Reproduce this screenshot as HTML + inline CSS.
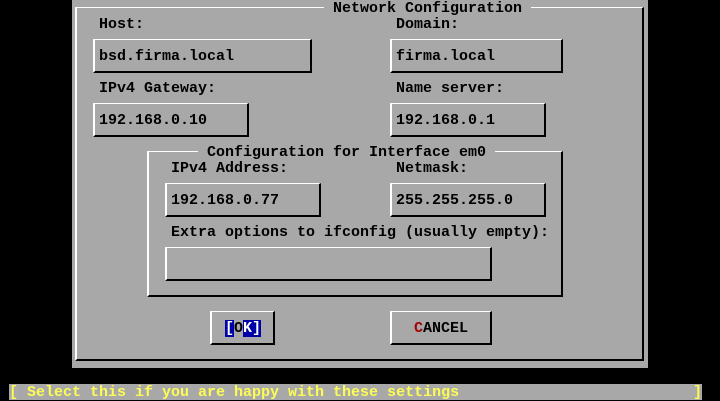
<!DOCTYPE html>
<html><head><meta charset="utf-8"><style>
*{margin:0;padding:0;box-sizing:border-box}
body{width:720px;height:400px;background:#000;position:relative;overflow:hidden;font-family:"Liberation Mono",monospace;font-size:15px;font-weight:bold;line-height:16px}
.a{position:absolute}
.t{position:absolute;height:16px;white-space:pre;color:#000;padding-top:1px;line-height:16px}
.box{position:absolute;border-top:1px solid #fff;border-left:2px solid #fff;border-bottom:2px solid #000;border-right:2px solid #000}
</style></head><body>
<div class="a" style="left:72px;top:0;width:576px;height:368px;background:#a8a8a8"></div>
<div class="box" style="left:75px;top:7px;width:569px;height:354px"></div>
<div class="t" style="left:324px;top:0;background:#a8a8a8"> Network Configuration </div>

<div class="t" style="left:99px;top:16px">Host:</div>
<div class="t" style="left:396px;top:16px">Domain:</div>
<div class="box" style="left:93px;top:39px;width:219px;height:34px"></div>
<div class="t" style="left:99px;top:48px">bsd.firma.local</div>
<div class="box" style="left:390px;top:39px;width:173px;height:34px"></div>
<div class="t" style="left:396px;top:48px">firma.local</div>

<div class="t" style="left:99px;top:80px">IPv4 Gateway:</div>
<div class="t" style="left:396px;top:80px">Name server:</div>
<div class="box" style="left:93px;top:103px;width:156px;height:34px"></div>
<div class="t" style="left:99px;top:112px">192.168.0.10</div>
<div class="box" style="left:390px;top:103px;width:156px;height:34px"></div>
<div class="t" style="left:396px;top:112px">192.168.0.1</div>

<div class="box" style="left:147px;top:151px;width:416px;height:146px"></div>
<div class="t" style="left:198px;top:144px;background:#a8a8a8"> Configuration for Interface em0 </div>
<div class="t" style="left:171px;top:160px">IPv4 Address:</div>
<div class="t" style="left:396px;top:160px">Netmask:</div>
<div class="box" style="left:165px;top:183px;width:156px;height:34px"></div>
<div class="t" style="left:171px;top:192px">192.168.0.77</div>
<div class="box" style="left:390px;top:183px;width:156px;height:34px"></div>
<div class="t" style="left:396px;top:192px">255.255.255.0</div>
<div class="t" style="left:171px;top:224px">Extra options to ifconfig (usually empty):</div>
<div class="box" style="left:165px;top:247px;width:327px;height:34px"></div>

<div class="box" style="left:210px;top:311px;width:65px;height:34px"></div>
<div class="t" style="left:225px;top:320px"><span style="background:#0000a8;color:#fff">[</span>O<span style="background:#0000a8;color:#fff">K]</span></div>
<div class="box" style="left:390px;top:311px;width:102px;height:34px"></div>
<div class="t" style="left:414px;top:320px"><span style="color:#a80000">C</span>ANCEL</div>

<div class="a" style="left:9px;top:384px;width:693px;height:16px;background:#a8a8a8"></div>
<div class="t" style="left:9px;top:384px;color:#fcfc54">[ Select this if you are happy with these settings</div>
<div class="t" style="left:693px;top:384px;color:#fcfc54">]</div>
</body></html>
